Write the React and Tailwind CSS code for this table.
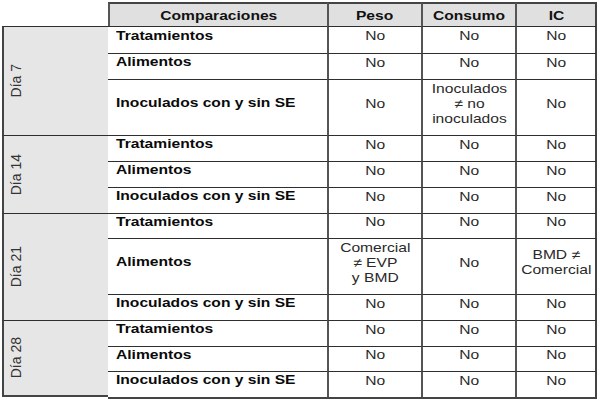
const font = { fontFamily: '"Liberation Sans", Arial, sans-serif' }

const groups = [
  {
    dia: "Día 7",
    rows: [
      { label: "Tratamientos", h: "h-[27px]", peso: "No", consumo: "No", ic: "No" },
      { label: "Alimentos", h: "h-[26px]", peso: "No", consumo: "No", ic: "No" },
      {
        label: "Inoculados con y sin SE",
        h: "h-[56px]",
        peso: "No",
        consumo: (
          <>
            Inoculados
            <br />≠ no
            <br />
            inoculados
          </>
        ),
        ic: "No",
      },
    ],
  },
  {
    dia: "Día 14",
    rows: [
      { label: "Tratamientos", h: "h-[26px]", peso: "No", consumo: "No", ic: "No" },
      { label: "Alimentos", h: "h-[26px]", peso: "No", consumo: "No", ic: "No" },
      { label: "Inoculados con y sin SE", h: "h-[26px]", peso: "No", consumo: "No", ic: "No" },
    ],
  },
  {
    dia: "Día 21",
    rows: [
      { label: "Tratamientos", h: "h-[25px]", peso: "No", consumo: "No", ic: "No" },
      {
        label: "Alimentos",
        h: "h-[56px]",
        peso: (
          <>
            Comercial
            <br />≠ EVP
            <br />y BMD
          </>
        ),
        consumo: "No",
        ic: (
          <>
            BMD ≠
            <br />
            Comercial
          </>
        ),
      },
      { label: "Inoculados con y sin SE", h: "h-[26px]", peso: "No", consumo: "No", ic: "No" },
    ],
  },
  {
    dia: "Día 28",
    rows: [
      { label: "Tratamientos", h: "h-[26px]", peso: "No", consumo: "No", ic: "No" },
      { label: "Alimentos", h: "h-[25px]", peso: "No", consumo: "No", ic: "No" },
      { label: "Inoculados con y sin SE", h: "h-[26px]", peso: "No", consumo: "No", ic: "No" },
    ],
  },
]

function Val({ children, last }) {
  return (
    <div
      className={
        "flex items-center justify-center pb-[9px] text-center text-[13px] leading-[15px] text-[#2a2a2a] border-t border-t-[#2e2e2e] border-l-2 border-l-[#555] " +
        (last ? "border-r-2 border-r-[#444]" : "")
      }
    >
      <span className="inline-block scale-x-[1.2]">{children}</span>
    </div>
  )
}

export default function App() {
  return (
    <div className="w-[600px] h-[400px] bg-white overflow-hidden pt-[2px] pl-[2px]" style={font}>
      <div className="grid grid-cols-[106px_219px_94px_94px_82px]">
        {/* header */}
        <div className="h-[24px]"></div>
        {["Comparaciones", "Peso", "Consumo", "IC"].map((t, i) => (
          <div
            key={t}
            className={
              "h-[24px] bg-[#e0e0e0] border-t-2 border-t-[#444] border-l-2 border-l-[#555] flex justify-center pt-[2px] text-[13px] font-bold text-[#111] " +
              (i === 3 ? "border-r-2 border-r-[#444]" : "")
            }
          >
            <span className="inline-block scale-x-[1.2]">{t}</span>
          </div>
        ))}

        {groups.map((g, gi) => (
          <div key={g.dia} className="contents">
            <div
              className={
                "row-span-3 bg-[#e6e6e6] border-t border-t-[#2e2e2e] border-l-2 border-l-[#444] flex items-center pl-[5px] " +
                (gi === 0 ? "row-start-2 " : "") +
                (gi === 3 ? "border-b-2 border-b-[#444]" : "")
              }
            >
              <span
                className="[writing-mode:vertical-rl] rotate-180 text-[14px] text-[#333] leading-none"
                style={{ fontFamily: '"Liberation Sans Narrow", "Liberation Sans", Arial, sans-serif' }}
              >
                {g.dia}
              </span>
            </div>
            {g.rows.map((r, ri) => (
              <div key={ri} className="contents">
                <div
                  className={
                    "col-start-2 " +
                    r.h +
                    " flex items-center pb-[9px] pl-2 text-[13px] font-bold text-[#0a0a0a] border-t border-t-[#2e2e2e]"
                  }
                >
                  <span className="inline-block origin-left scale-x-[1.2]">{r.label}</span>
                </div>
                <Val>{r.peso}</Val>
                <Val>{r.consumo}</Val>
                <Val last>{r.ic}</Val>
              </div>
            ))}
          </div>
        ))}
        {/* bottom border */}
        <div className="col-start-2 col-span-4 border-t-2 border-t-[#444]"></div>
      </div>
    </div>
  )
}
